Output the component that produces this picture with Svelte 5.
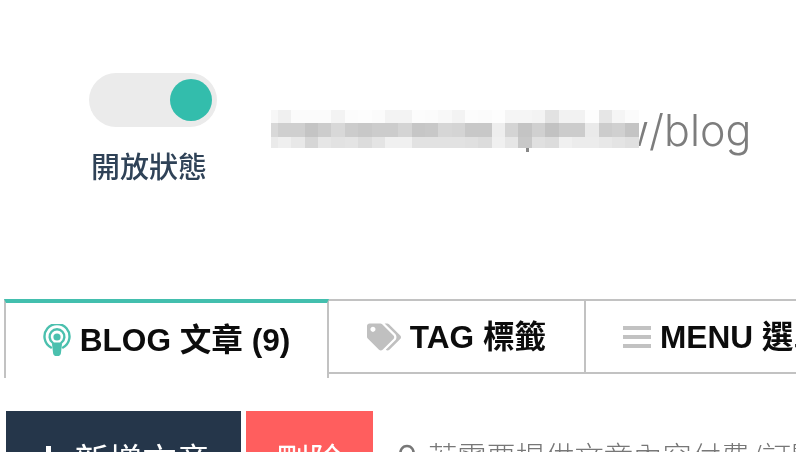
<script>
  // pixelated part of the address, one row of grey levels per band
  const bands = [
    ['f7','f0','fb','fb','fb','f3','fc','fd','fb','f3','f3','fc','fb','f8','f3','fc','fb','fd','f5','f5','f3','e2','f2','f2','fd','e6','f5','fb'],
    ['d8','cf','cf','c4','cc','d8','cc','c8','cc','cc','d4','c6','c8','d6','d4','c8','c8','ee','d4','c4','d0','c2','cc','cc','ea','cc','d0','c4'],
    ['ea','ef','e8','d6','e6','e2','e4','dc','e4','f0','f0','e2','e2','e2','e2','e0','dc','f0','e6','c8','e0','dc','f0','ec','ec','e8','e4','e0']
  ];
</script>

<div class="page">
  <header class="head">
    <div class="status">
      <div class="switch"><span class="knob"></span></div>
      <div class="status-label">開放狀態</div>
    </div>
    <div class="url">
      <div class="mosaic">
        {#each bands as band}
          {#each band as level}
            <span style="background:#{level}{level}{level}"></span>
          {/each}
        {/each}
        <i class="stem"></i>
      </div>
      <span class="url-text">w/blog</span>
    </div>
  </header>

  <nav class="tabs">
    <div class="tab active">
      <svg class="ico-pod" viewBox="0 0 28 32" aria-hidden="true">
        <path d="M8 23.500a12.500 12.500 0 1 1 12 0" fill="none" stroke="#4bc0ae" stroke-width="2.400" stroke-linecap="round"/>
        <path d="M9.600 18.600a7.400 7.400 0 1 1 8.800 0" fill="none" stroke="#4bc0ae" stroke-width="2.400" stroke-linecap="round"/>
        <circle cx="14" cy="13" r="3.600" fill="#4bc0ae"/>
        <path d="M10.500 18.500h7a1.500 1.500 0 0 1 1.500 1.600l-1 8.300a4 3.600 0 0 1-8 0l-1-8.300a1.500 1.500 0 0 1 1.500-1.600z" fill="#4bc0ae"/>
      </svg>
      <span>BLOG 文章 (9)</span>
    </div>
    <div class="tab second">
      <svg class="ico-tag" viewBox="0 0 640 512" aria-hidden="true">
        <path fill="#c0c0c0" d="M497.941 225.941L286.059 14.059A48 48 0 0 0 252.118 0H48C21.49 0 0 21.49 0 48v204.118a48 48 0 0 0 14.059 33.941l211.882 211.882c18.744 18.745 49.136 18.746 67.882 0l204.118-204.118c18.745-18.745 18.745-49.137 0-67.882zM112 160c-26.51 0-48-21.49-48-48s21.49-48 48-48 48 21.49 48 48-21.49 48-48 48zm513.941 133.823L421.823 497.941c-18.745 18.745-49.137 18.745-67.882 0l-.36-.36L527.64 323.522c16.999-16.999 26.36-39.6 26.36-63.64s-9.362-46.641-26.36-63.64L331.397 0h48.721a48 48 0 0 1 33.941 14.059l211.882 211.882c18.745 18.745 18.745 49.137 0 67.882z"/>
      </svg>
      <span>TAG 標籤</span>
    </div>
    <div class="tab third">
      <span class="ico-menu"><i></i><i></i><i></i></span>
      <span>MENU 選單</span>
    </div>
  </nav>

  <div class="actions">
    <button class="btn add"><span class="plus"></span>新增文章</button>
    <button class="btn del">刪除</button>
    <p class="hint">
      <svg class="ico-hint" viewBox="0 0 18 24" aria-hidden="true">
        <path d="M3 12a6.500 6.500 0 1 1 12 0" fill="none" stroke="#777" stroke-width="2.600"/>
      </svg>
      若需要提供文章內容付費/訂閱
    </p>
  </div>
</div>

<style>
  :global(body) {
    margin: 0;
    background: #fff;
  }

  .page {
    width: 796px;
    height: 452px;
    overflow: hidden;
    filter: blur(0.4px);
    font-family: "Liberation Sans", "Noto Sans CJK TC", sans-serif;
  }

  .head {
    display: flex;
    align-items: flex-start;
    height: 226px;
    box-sizing: border-box;
    padding: 73px 0 0 89px;
  }

  .status {
    flex: none;
    width: 128px;
  }

  .switch {
    display: flex;
    justify-content: flex-end;
    align-items: center;
    height: 54px;
    padding-right: 5px;
    border-radius: 27px;
    background: #ebebeb;
  }

  .knob {
    width: 42px;
    height: 42px;
    border-radius: 50%;
    background: #33bdac;
  }

  .status-label {
    margin-top: 21px;
    margin-left: 2px;
    font-size: 29px;
    line-height: 34px;
    font-weight: 500;
    color: #2f4257;
    font-family: "Noto Sans CJK TC", sans-serif;
    white-space: nowrap;
  }

  .url {
    display: flex;
    align-items: center;
    height: 38px;
    margin: 37px 0 0 54px;
  }

  .mosaic {
    position: relative;
    z-index: 1;
    flex: none;
    display: grid;
    grid-template-columns: 7px repeat(27, 13.37px);
    grid-template-rows: 13px 14px 11px;
    width: 368px;
    height: 38px;
  }

  .stem {
    position: absolute;
    left: 255px;
    top: 38px;
    width: 3px;
    height: 4px;
    background: #888;
  }

  .url-text {
    margin-left: -25px;
    padding-top: 2px;
    font-family: Inter, sans-serif;
    font-weight: 300;
    font-size: 43px;
    color: #7d7d7d;
    white-space: nowrap;
  }

  .tabs {
    display: flex;
    align-items: flex-start;
    margin-left: 4px;
    margin-top: 73px;
    font-size: 31.600px;
    font-weight: 700;
    line-height: 36px;
    color: #0c0c0c;
  }

  .tab {
    display: flex;
    align-items: center;
    justify-content: center;
    flex: none;
    gap: 9px;
    box-sizing: border-box;
    white-space: nowrap;
    border-style: solid;
    border-color: #c2c2c2;
  }

  .active {
    width: 325px;
    height: 79px;
    padding-bottom: 1px;
    border-width: 4px 2px 0;
    border-top-color: #43bfae;
  }

  .second {
    width: 257px;
    height: 75px;
    border-width: 2px 2px 2px 0;
  }

  .third {
    flex: 1;
    justify-content: flex-start;
    height: 75px;
    padding-left: 37px;
    border-width: 2px 0;
  }

  .ico-pod {
    width: 28px;
    height: 32px;
    flex: none;
  }

  .ico-tag {
    width: 34px;
    height: 28px;
    flex: none;
  }

  .ico-menu {
    display: flex;
    flex-direction: column;
    gap: 5px;
    width: 28px;
    flex: none;
  }

  .ico-menu i {
    height: 4px;
    background: #c2c2c2;
  }

  .actions {
    display: flex;
    align-items: flex-start;
    gap: 5px;
    margin: 33px 0 0 6px;
  }

  .btn {
    display: flex;
    flex: none;
    justify-content: center;
    align-items: center;
    height: 80px;
    border: 0;
    padding: 14px 0 0;
    font-family: inherit;
    font-size: 34px;
    color: #fff;
  }

  .add {
    width: 235px;
    gap: 20px;
    padding-left: 6px;
    background: #25364a;
  }

  .plus {
    width: 12px;
    height: 24px;
    background:
      linear-gradient(#fff, #fff) center / 5px 100% no-repeat,
      linear-gradient(#fff, #fff) center / 100% 5px no-repeat;
  }

  .del {
    width: 127px;
    background: #ff5e5e;
  }

  .hint {
    display: flex;
    flex: none;
    align-items: center;
    gap: 12px;
    margin: 24px 0 0 20px;
    font-family: "Noto Sans CJK TC", sans-serif;
    font-weight: 300;
    font-size: 29.300px;
    line-height: 40px;
    color: #777;
    white-space: nowrap;
  }

  .ico-hint {
    width: 18px;
    height: 24px;
    flex: none;
  }
</style>
